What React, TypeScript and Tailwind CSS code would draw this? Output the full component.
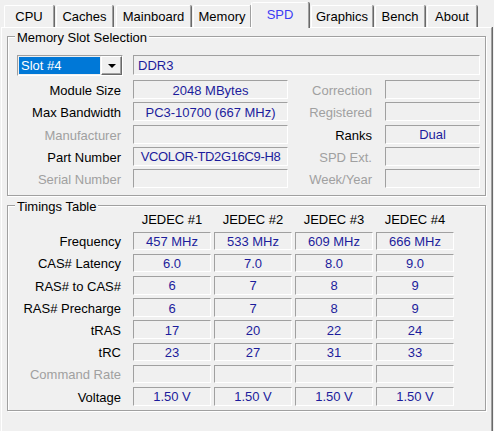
const tabs = [
  { name: 'CPU', w: 'w-[50px]', ml: 'ml-[4px]' },
  { name: 'Caches', w: 'w-[57px]', ml: 'ml-[2px]' },
  { name: 'Mainboard', w: 'w-[75px]', ml: 'ml-[3px]' },
  { name: 'Memory', w: 'w-[58px]', ml: 'ml-[2px]' },
  { name: 'SPD', w: 'w-[58px]', ml: 'ml-0', active: true },
  { name: 'Graphics', w: 'w-[62px]', ml: 'ml-[2px]' },
  { name: 'Bench', w: 'w-[50px]', ml: 'ml-[2px]' },
  { name: 'About', w: 'w-[50px]', ml: 'ml-[2px]' },
]

const slotRows = [
  { l: 'Module Size', v: '2048 MBytes', rl: 'Correction', rv: '', rOff: true },
  { l: 'Max Bandwidth', v: 'PC3-10700 (667 MHz)', rl: 'Registered', rv: '', rOff: true },
  { l: 'Manufacturer', v: '', off: true, rl: 'Ranks', rv: 'Dual' },
  { l: 'Part Number', v: 'VCOLOR-TD2G16C9-H8', tight: true, rl: 'SPD Ext.', rv: '', rOff: true },
  { l: 'Serial Number', v: '', off: true, rl: 'Week/Year', rv: '', rOff: true },
]

const timings = [
  { l: 'Frequency', v: ['457 MHz', '533 MHz', '609 MHz', '666 MHz'] },
  { l: 'CAS# Latency', v: ['6.0', '7.0', '8.0', '9.0'] },
  { l: 'RAS# to CAS#', v: ['6', '7', '8', '9'] },
  { l: 'RAS# Precharge', v: ['6', '7', '8', '9'] },
  { l: 'tRAS', v: ['17', '20', '22', '24'] },
  { l: 'tRC', v: ['23', '27', '31', '33'] },
  { l: 'Command Rate', v: ['', '', '', ''], off: true },
  { l: 'Voltage', v: ['1.50 V', '1.50 V', '1.50 V', '1.50 V'] },
]

// sunken edit box, classic windows look
const sunken = 'border border-t-[#a0a0a0] border-l-[#a0a0a0] border-b-white border-r-white'

function Field({ children, className = '' }: { children?: React.ReactNode; className?: string }) {
  return (
    <div className={`flex items-center pt-[2px] leading-[16px] whitespace-nowrap text-[#1c1c9c] ${sunken} ${className}`}>
      {children}
    </div>
  )
}

function Group({ title, className = '', children }: { title: string; className?: string; children: React.ReactNode }) {
  return (
    <div className={`relative border border-[#a0a0a0] shadow-[1px_1px_0_#fff,inset_1px_1px_0_#fff] ${className}`}>
      <span className="absolute left-[7px] top-[-7px] bg-[#f0f0f0] px-[2px] leading-[16px] text-black">{title}</span>
      {children}
    </div>
  )
}

export default function App() {
  return (
    <div
      className="w-[494px] h-[431px] overflow-hidden bg-[#f0f0f0] text-[13px] text-black"
      style={{ fontFamily: '"Liberation Sans", Arial, sans-serif' }}
    >
      {/* tab strip */}
      <div className="flex items-end h-[27px]">
        {tabs.map(t =>
          t.active ? (
            <div
              key={t.name}
              className={`relative z-10 -mb-px h-[26px] ${t.w} ${t.ml} bg-[#f0f0f0] border-t border-l border-r border-t-white border-l-white border-r-[#a0a0a0] shadow-[1px_0_0_#696969] rounded-t-[2px] flex justify-center pt-[4px] leading-[16px] text-[#3c3cf4]`}
            >
              {t.name}
            </div>
          ) : (
            <div
              key={t.name}
              className={`h-[22px] ${t.w} ${t.ml} border-t border-l border-r border-t-white border-l-white border-r-[#a0a0a0] shadow-[1px_0_0_#696969] rounded-t-[2px] flex justify-center pt-[3px] leading-[16px]`}
            >
              {t.name}
            </div>
          )
        )}
      </div>

      {/* tab page */}
      <div className="ml-[1px] w-[491px] h-[420px] border-t border-l border-r border-t-white border-l-white border-r-[#a0a0a0] shadow-[1px_0_0_#696969] flex flex-col">
        <Group title="Memory Slot Selection" className="ml-[5px] mt-[8px] w-[479px] h-[160px] shrink-0">
          <div className="pt-[18px]">
            <div className="flex items-start">
              {/* slot combo */}
              <div className="ml-[9px] w-[106px] h-[21px] flex border border-t-[#a0a0a0] border-l-[#a0a0a0] border-b-white border-r-white">
                <div className="flex-1 m-px bg-[#0078d7] text-white leading-[16px] pl-[2px] pt-px">Slot #4</div>
                <div className="w-[21px] flex items-center justify-center bg-[#f0f0f0] border border-t-white border-l-white border-b-[#696969] border-r-[#696969] shadow-[inset_-1px_-1px_0_#a0a0a0]">
                  <svg width="8" height="4" viewBox="0 0 8 4">
                    <path d="M0 0h8L4 4z" fill="#000" />
                  </svg>
                </div>
              </div>
              <Field className="ml-[10px] w-[347px] h-[20px] pl-[4px]">DDR3</Field>
            </div>

            <div className="mt-[4px] flex flex-col gap-y-[3.3px]">
              {slotRows.map(r => (
                <div key={r.l} className="flex h-[19px]">
                  <div className={`w-[113px] text-right leading-[16px] pt-[3px] ${r.off ? 'text-[#a0a0a0]' : ''}`}>{r.l}</div>
                  <Field className={`ml-[12px] w-[155px] h-[19px] justify-center ${r.tight ? 'tracking-[-0.35px]' : ''}`}>{r.v}</Field>
                  <div className={`w-[84px] text-right leading-[16px] pt-[3px] ${r.rOff ? 'text-[#a0a0a0]' : ''}`}>{r.rl}</div>
                  <Field className="ml-[13px] w-[95px] h-[19px] justify-center">{r.rv}</Field>
                </div>
              ))}
            </div>
          </div>
        </Group>

        <Group title="Timings Table" className="ml-[5px] mt-[9px] w-[479px] h-[206px] shrink-0">
          <div className="pt-[4px]">
            <div className="flex h-[20px] items-center">
              <div className="w-[113px]" />
              <div className="ml-[12px] flex gap-x-[3px]">
                {['JEDEC #1', 'JEDEC #2', 'JEDEC #3', 'JEDEC #4'].map(h => (
                  <div key={h} className="w-[78px] text-center leading-[16px]">{h}</div>
                ))}
              </div>
            </div>
            <div className="mt-[1.7px] flex flex-col gap-y-[3.7px]">
              {timings.map(r => (
                <div key={r.l} className="flex h-[18.5px]">
                  <div className={`w-[113px] text-right leading-[16px] pt-[2.5px] ${r.off ? 'text-[#a0a0a0]' : ''}`}>{r.l}</div>
                  <div className="ml-[12px] flex gap-x-[3px]">
                    {r.v.map((v, i) => (
                      <Field key={i} className="w-[78px] h-[18.5px] justify-center">{v}</Field>
                    ))}
                  </div>
                </div>
              ))}
            </div>
          </div>
        </Group>
      </div>
    </div>
  )
}
